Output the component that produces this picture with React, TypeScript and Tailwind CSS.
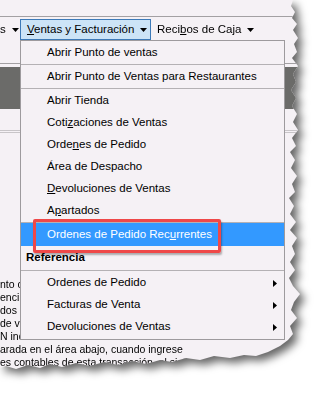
import React from 'react';

const Caret = () => (
  <svg width="7" height="4" viewBox="0 0 7 4" className="ml-[6px]">
    <path d="M0 0h7L3.5 4z" fill="#000" />
  </svg>
);

const SubArrow = () => (
  <svg width="4" height="7" viewBox="0 0 4 7">
    <path d="M0 0l4 3.5L0 7z" fill="#000" />
  </svg>
);

function Item({ children, sub }: { children: React.ReactNode; sub?: boolean }) {
  return (
    <div className="h-[22px] flex items-center justify-between pl-[26px] pr-[7px]">
      <span>{children}</span>
      {sub && <SubArrow />}
    </div>
  );
}

const Sep = () => <div className="h-[2px] border-t border-[#b4b1b4]" />;

export default function App() {
  return (
    <div className="w-[330px] h-[399px] bg-white overflow-hidden font-['Liberation_Sans',Arial,sans-serif] text-black">
      <div className="[filter:drop-shadow(5px_5px_4px_rgba(0,0,0,0.6))]">
        <div className="relative w-[310px] h-[375px] bg-[#f5f1f5] overflow-hidden [clip-path:polygon(0_0,293px_0,291px_6px,295px_12px,292px_18px,297px_24px,293px_30px,298px_38px,294px_44px,297px_52px,292px_58px,298px_66px,293px_74px,296px_82px,291px_90px,296px_98px,292px_106px,297px_114px,293px_122px,298px_130px,292px_138px,296px_146px,290px_152px,295px_160px,291px_168px,297px_176px,292px_184px,295px_192px,289px_198px,294px_206px,290px_214px,296px_222px,290px_230px,297px_238px,292px_246px,295px_254px,290px_262px,295px_270px,289px_278px,293px_286px,300px_294px,294px_302px,291px_310px,297px_318px,290px_326px,293px_334px,288px_340px,280px_346px,268px_352px,256px_356px,244px_355px,230px_358px,214px_356px,200px_360px,186px_358px,172px_362px,160px_360px,146px_364px,132px_361px,118px_365px,104px_362px,90px_366px,76px_363px,62px_367px,50px_364px,40px_368px,28px_365px,16px_369px,6px_366px,0_368px)]">
          {/* background window */}
          <div className="h-[16px]" />
          <div className="h-px bg-[#a3a0a3]" />
          <div className="h-[23px] flex items-start text-[11.5px]">
            <div className="w-[20px] h-[21px] mt-[2px] flex items-center">
              <span>s</span>
              <Caret />
            </div>
            <div className="w-[131px] h-[21px] mt-[2px] flex items-center pl-[6px] bg-[#cce4f7] border border-[#3d7ab8]">
              <span>
                <u>V</u>entas y Facturación
              </span>
              <Caret />
            </div>
            <div className="h-[21px] mt-[2px] flex items-center pl-[6px]">
              <span>
                Reci<u>b</u>os de Caja
              </span>
              <Caret />
            </div>
          </div>
          <div className="h-[23px]" />
          <div className="h-px bg-[#a3a0a3]" />
          <div className="h-[3px]" />
          <div className="h-[42px] bg-[#6b6b69]" />
          <div className="h-[21px]" />
          <div className="h-px bg-[#c8c5c8]" />
          <div className="h-px" />
          <div className="h-px bg-[#c8c5c8]" />
          <div className="h-[145px]" />
          <div className="text-[10.5px] leading-[13px] whitespace-nowrap">
            <div className="w-[20px] overflow-hidden">nto c</div>
            <div className="w-[20px] overflow-hidden">enci</div>
            <div className="w-[20px] overflow-hidden">dos .</div>
            <div className="w-[20px] overflow-hidden">de v</div>
            <div className="w-[20px] overflow-hidden">N ind</div>
            <div>arada en el área abajo, cuando ingrese</div>
            <div>es contables de esta transacción, el sistema</div>
          </div>

          {/* dropdown menu */}
          <div className="absolute left-[20px] top-[40px] w-[265px] bg-[#f5f1f5] border border-[#9d9a9d] py-px text-[11.5px]">
            <Item>Abrir Punto de ventas</Item>
            <Sep />
            <Item>Abrir Punto de Ventas para Restaurantes</Item>
            <Sep />
            <Item>Abrir Tienda</Item>
            <Item>
              Coti<u>z</u>aciones de Ventas
            </Item>
            <Item>
              Orde<u>n</u>es de Pedido
            </Item>
            <Item>Área de Despacho</Item>
            <Item>
              <u>D</u>evoluciones de Ventas
            </Item>
            <Item>
              A<u>p</u>artados
            </Item>
            <div className="h-px bg-[#b4b1b4]" />
            <div className="h-[23px] flex items-center pl-[26px] bg-[#3399ff] text-white">
              <span>
                Ordenes de Pedido Rec<u>u</u>rrentes
              </span>
            </div>
            <div className="h-[24px] flex items-center pl-[5px] font-bold">Referencia</div>
            <Sep />
            <Item sub>Ordenes de Pedido</Item>
            <Item sub>Facturas de Venta</Item>
            <Item sub>Devoluciones de Ventas</Item>
          </div>

          {/* annotation */}
          <div className="absolute left-[33px] top-[219px] w-[188px] h-[34px] border-[3px] border-[#ef4848] rounded-[2px] shadow-[1px_2px_2px_rgba(0,0,0,0.3)]" />
        </div>
      </div>
    </div>
  );
}
